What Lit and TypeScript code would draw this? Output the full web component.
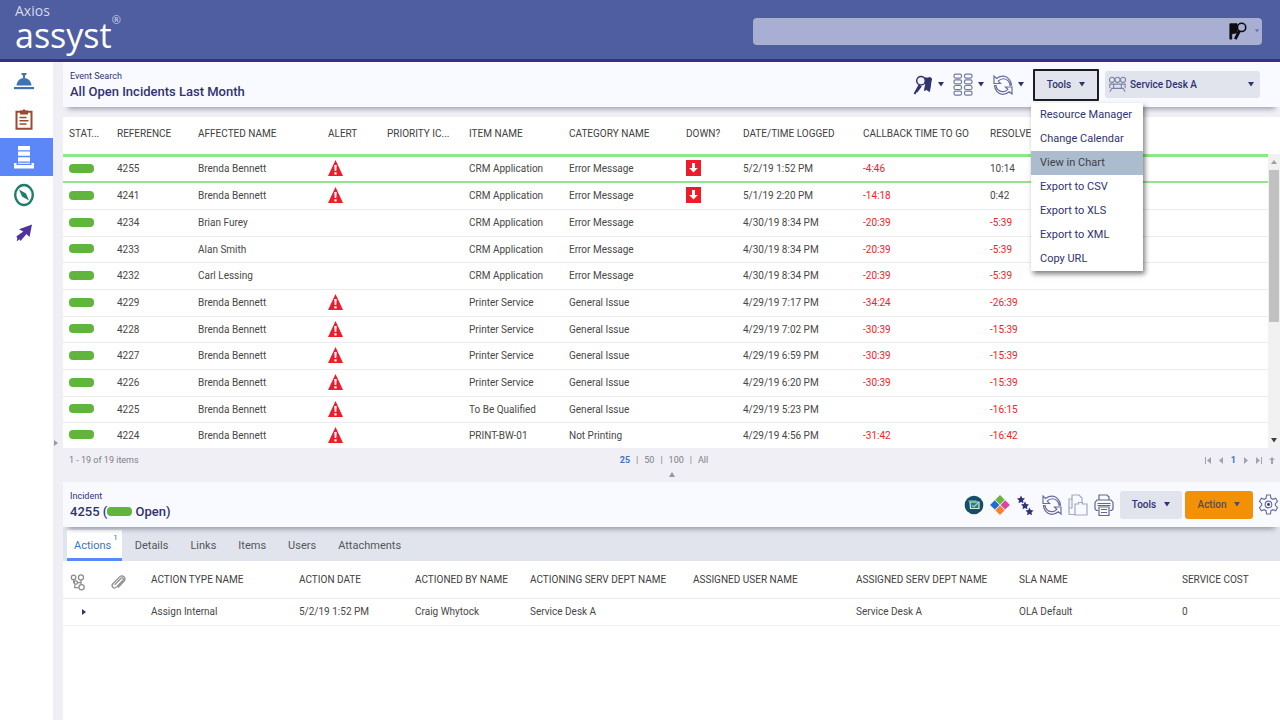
import { LitElement, html, svg, css, nothing } from "lit";
import { customElement, property } from "lit/decorators.js";
import { classMap } from "lit/directives/class-map.js";

const caret = html`<svg class="caret" width="6" height="5" viewBox="0 0 6 5" aria-hidden="true"><path d="M0 0h6L3 4.6z" fill="currentColor" /></svg>`;

const icon = (body: unknown, size = 20, box = 20) =>
  html`<svg width=${size} height=${size} viewBox="0 0 ${box} ${box}" fill="none" stroke="currentColor" aria-hidden="true">${body}</svg>`;

const icons = {
  bell: svg`<g fill="#3c74b4" stroke="none"><path d="M7.500 2h5v1.500l-1.500 1v2.500h-2v-2.500l-1.500-1z"/><path d="M2.500 14.500c.3-4.500 3.500-7.500 7.500-7.500s7.200 3 7.500 7.500z"/><path d="M0 16h20v2.200h-20z"/></g>`,
  clipboard: svg`<g stroke="#9b4a30"><path d="M2.500 2.800h15v17h-15z" stroke-width="2"/><path d="M6 1.500h2.500l1.500-1.500 1.500 1.500h2.500v4h-8z" fill="#9b4a30" stroke="none"/><path d="M5.500 8.500h7M5.500 11.800h9M5.500 15h7" stroke-width="1.500"/></g>`,
  stack: svg`<g fill="#fff" stroke="none"><path d="M4-1h12v4.200h-12zM4 4.600h12v4.200h-12zM4 10.200h12v4.200h-12zM4 15.800h12v1h-12z"/><path d="M0 16h2.500v2h15v-2h2.500v5.500h-20z"/></g>`,
  compass: svg`<g><ellipse cx="10" cy="10" rx="8.800" ry="10" stroke="#1f7d6b" stroke-width="2.400"/><path d="M5 4.500l7 4 3 7-7-4z" fill="#1f7d6b" stroke="none"/></g>`,
  arrow: svg`<g fill="#50329c" stroke="none"><path d="M18 1.500l-2.500 12.500-3-3-6 7-1-1.700-2.800 2.200.6-3.500-1-1.500 7-5-4.300-2.200z"/></g>`,
  flagSearch: svg`<g><path d="M9 3.500c3-1.500 5 .5 8-1l1.500 1-2 13-3-2-2 1 1-6z" fill="#303370" stroke="#303370"/><circle cx="8" cy="5.800" r="4.300" fill="#f1f3fb" stroke="#303370" stroke-width="1.500"/><path d="M6.500 10L1.500 19M8 11l-4.500 6" stroke="#303370" stroke-width="2"/></g>`,
  flagSearchDark: svg`<g><path d="M1 2h8v10l-6 1v6h-2z" fill="#0c0d10" stroke="#0c0d10"/><circle cx="14" cy="6" r="4.600" fill="#a9aed3" stroke="#0c0d10" stroke-width="1.800"/><path d="M11.500 10L7 19" stroke="#0c0d10" stroke-width="3.200"/></g>`,
  grid: svg`<g stroke="#74799f" stroke-width="1.200">${[0, 1, 2, 3].map((r) => svg`<rect x="1" y=${-0.9 + r * 5.7} width="7.500" height="4" rx="1.500"/><rect x="11.500" y=${-0.9 + r * 5.7} width="7.500" height="4" rx="1.500"/>`)}</g>`,
  refresh: svg`<g stroke="#686c9c" stroke-width="1.200"><path d="M1 1v7.500h6.500l-2.300-2.400c3-3.300 7.600-3 10.200 0 1 1.200 1.500 2.500 1.600 4h1.500c-.2-4-3.300-8.600-8-8.900-2.700-.1-5 .8-6.800 2.300z"/><path d="M19 19v-7h-6.500l2.300 2.300c-3 3.300-7.600 3-10.200 0-1-1.200-1.500-2.400-1.600-3.800h-1.500c.2 4 3.300 8.600 8 8.900 2.700.1 5-1.100 6.800-2.600z"/></g>`,
  people: svg`<g stroke="#7b80a6" stroke-width="1.300"><circle cx="3.500" cy="4.500" r="3"/><circle cx="10" cy="4.500" r="3"/><circle cx="16.500" cy="4.500" r="3"/><path d="M1 18.500l2.500-4h13l2.500 4M5.500 14.500v-5h9v5M1 14.500V9.500h4M19 14.500V9.500h-4"/></g>`,
  alert: svg`<g stroke="none"><path d="M7.500 0L15 16h-15z" fill="#ee1c2b"/><path d="M6.300 5h2.400l-.4 6h-1.600zM6.400 12.300h2.200v2.200h-2.200z" fill="#fff"/></g>`,
  down: svg`<g stroke="none"><path d="M0 0h15v16h-15z" fill="#ee1c2b"/><path d="M6 3h3v5h2.800L7.500 12.500 3.200 8H6z" fill="#fff"/></g>`,
  badge: svg`<g><circle cx="10" cy="10" r="9.300" fill="#164e67" stroke="none"/><path d="M6 7h9v6.500h-8.500z" fill="#1d8295" stroke="#d7ead8" stroke-width="1.200"/><path d="M4.500 6h8M8 10.500l2 1.300 4-3.800" stroke="#9fd0b1" stroke-width="1.200"/></g>`,
  diamonds: svg`<g stroke="none"><path d="M10 0l4.700 4.700L10 9.400 5.300 4.700z" fill="#6cb23e"/><path d="M4.800 5.200L9.500 9.900l-4.700 4.700L.1 9.900z" fill="#1c6fd0"/><path d="M15.200 5.200l4.700 4.700-4.700 4.700-4.700-4.700z" fill="#d9489e"/><path d="M10 10.500l4.700 4.700L10 19.900l-4.700-4.700z" fill="#f58232"/></g>`,
  stars: svg`<g fill="#2f3376" stroke="none">${[[5, 4.5], [9, 10.500], [13.500, 16.500]].map(([x, y]) => svg`<path transform="translate(${x} ${y})" d="M0-4l1.200 2.600 2.800.3-2 2 .5 2.900L0 2.400-2.500 3.800l.5-2.900-2-2 2.800-.3z"/>`)}</g>`,
  copy: svg`<g stroke="#a3a6c3" stroke-width="1.200"><path d="M1 19.500v-15.500h3v-4h7l3 3v4.500M4 4v9h-3M1 19.500h6"/><path d="M7 9h3.500v-1.500h4v1.500h4.500v11h-12z"/></g>`,
  print: svg`<g stroke="#62668f" stroke-width="1.200"><path d="M5 5V0h8l2 2v3M4 15.500h-1.500l-1.500-1.500v-6.500l2-2.500h14l2 2.500v6.500l-1.500 1.500h-1.500M5 12h10v8.500h-10zM3.500 8.500h13M3.500 10.500h13M7 14.500h6M7 17.500h6"/></g>`,
  gear: svg`<g stroke="#686c9c" stroke-width="1.200"><path d="M8 0h4l.6 3.500 2 1.100 2.900-1.200 2 3.400-2.300 2.300v1.800l2.300 2.300-2 3.400-2.900-1.200-2 1.100-.6 3.500h-4l-.6-3.500-2-1.100-2.900 1.200-2-3.400 2.300-2.300v-1.800l-2.300-2.300 2-3.400 2.900 1.200 2-1.100z"/><circle cx="10" cy="10" r="3.500"/><circle cx="10" cy="10" r="1.500" fill="#2f3376" stroke="none"/></g>`,
  tree: svg`<g stroke="#8c8c8c" stroke-width="1.100"><circle cx="4" cy="3" r="2"/><circle cx="10.500" cy="3" r="2.200"/><circle cx="6" cy="7.500" r="1.500"/><circle cx="11" cy="11.500" r="2.300"/><path d="M4 5v2.500h.5M10.500 5.200v4M7.500 7.500h3M5 9.500v2.500h3.500"/></g>`,
  clip: svg`<g stroke="#8c8c8c" stroke-width="1.100"><path d="M4 9.500l5.500-5.500c1.500-1.300 3 .3 1.700 1.700L5.500 11.500c-2 2-5-.6-3-3L8.500 2.500c2.500-2.300 6 .8 4 3.500L7 11.800"/></g>`,
};

interface Incident {
  ref: string;
  name: string;
  alert: boolean;
  item: string;
  category: string;
  down?: boolean;
  logged: string;
  callback: string;
  resolve: string;
}

const row = (ref: string, name: string, alert: boolean, item: string, category: string, logged: string, callback: string, resolve: string, down = false): Incident =>
  ({ ref, name, alert, item, category, logged, callback, resolve, down });

const incidents: Incident[] = [
  row("4255", "Brenda Bennett", true, "CRM Application", "Error Message", "5/2/19 1:52 PM", "-4:46", "10:14", true),
  row("4241", "Brenda Bennett", true, "CRM Application", "Error Message", "5/1/19 2:20 PM", "-14:18", "0:42", true),
  row("4234", "Brian Furey", false, "CRM Application", "Error Message", "4/30/19 8:34 PM", "-20:39", "-5:39"),
  row("4233", "Alan Smith", false, "CRM Application", "Error Message", "4/30/19 8:34 PM", "-20:39", "-5:39"),
  row("4232", "Carl Lessing", false, "CRM Application", "Error Message", "4/30/19 8:34 PM", "-20:39", "-5:39"),
  row("4229", "Brenda Bennett", true, "Printer Service", "General Issue", "4/29/19 7:17 PM", "-34:24", "-26:39"),
  row("4228", "Brenda Bennett", true, "Printer Service", "General Issue", "4/29/19 7:02 PM", "-30:39", "-15:39"),
  row("4227", "Brenda Bennett", true, "Printer Service", "General Issue", "4/29/19 6:59 PM", "-30:39", "-15:39"),
  row("4226", "Brenda Bennett", true, "Printer Service", "General Issue", "4/29/19 6:20 PM", "-30:39", "-15:39"),
  row("4225", "Brenda Bennett", true, "To Be Qualified", "General Issue", "4/29/19 5:23 PM", "", "-16:15"),
  row("4224", "Brenda Bennett", true, "PRINT-BW-01", "Not Printing", "4/29/19 4:56 PM", "-31:42", "-16:42"),
];

const shared = css`
  * {
    box-sizing: border-box;
  }
  button,
  select,
  input {
    font: inherit;
    color: inherit;
    border: 0;
    padding: 0;
    background: none;
  }
  button {
    display: flex;
    align-items: center;
    justify-content: center;
  }
  svg {
    display: block;
    flex: none;
    overflow: visible;
  }
  a {
    color: inherit;
    text-decoration: none;
  }
  .pill {
    display: inline-block;
    width: 25px;
    height: 9px;
    border-radius: 4px;
    background: #62b53c;
  }
  .bar {
    position: relative;
    display: flex;
    align-items: center;
    justify-content: space-between;
    height: 45px;
    padding-left: 7px;
    background: #f9faff;
    color: #303370;
    box-shadow: 0 7px 5px -5px rgba(60, 60, 80, 0.45);
  }
  .titles p,
  .titles h1,
  .titles h2 {
    margin: 0;
  }
  .titles p {
    font-size: 9px;
    line-height: 14px;
  }
  .titles h1,
  .titles h2 {
    font-size: 13px;
    line-height: 18px;
    font-weight: 500;
  }
  .tools {
    display: flex;
    align-items: center;
  }
  .btn {
    height: 28px;
    gap: 8px;
    border-radius: 3px;
    background: #e1e4ec;
    font-size: 10px;
    font-weight: 500;
    color: #303370;
  }
  table {
    width: 100%;
    table-layout: fixed;
    border-collapse: separate;
    border-spacing: 0;
    font-size: 10px;
    line-height: 14px;
    color: #484848;
  }
  th,
  td {
    padding: 0 0 0 6px;
    text-align: left;
    font-weight: 400;
    white-space: nowrap;
    vertical-align: middle;
  }
  th {
    height: 37px;
    padding-bottom: 4px;
    color: #404040;
  }
  td {
    height: 27px;
    border-bottom: 1px solid #ebebeb;
  }
`;

@customElement("app-header")
class AppHeader extends LitElement {
  static styles = [
    shared,
    css`
      :host {
        display: flex;
        align-items: center;
        justify-content: space-between;
        height: 62px;
        padding: 0 18px 0 15px;
        background: #4f5da1;
        border-bottom: 3px solid #3a2f80;
      }
      .logo {
        display: grid;
        grid-template-columns: auto auto;
        padding-bottom: 4px;
        font-family: "Open Sans", sans-serif;
        color: #fff;
      }
      .maker {
        grid-column: 1 / -1;
        font-size: 14px;
        line-height: 16px;
        color: #d5d9ee;
      }
      .name {
        font-size: 34px;
        line-height: 33px;
      }
      .reg {
        font-size: 11px;
        line-height: 1px;
        color: #d5d9ee;
      }
      .search {
        display: flex;
        align-items: center;
        max-width: 509px;
        flex: 1;
        height: 27px;
        gap: 8px;
        margin-top: 3px;
        padding-right: 3px;
        border-radius: 4px;
        background: #a9aed3;
        color: #6b6fae;
      }
      input {
        flex: 1;
        min-width: 0;
        height: 100%;
        padding-left: 8px;
        color: #20234f;
      }
    `,
  ];
  render() {
    return html`
      <div class="logo"><span class="maker">Axios</span><span class="name">assyst</span><span class="reg">®</span></div>
      <div class="search">
        <input type="text" aria-label="Search" />
        <button aria-label="Run search">${icon(icons.flagSearchDark, 18)}</button>
        <button aria-label="Search options"><svg width="4" height="4" viewBox="0 0 6 5" aria-hidden="true"><path d="M0 0h6L3 4.600z" fill="currentColor" /></svg></button>
      </div>
    `;
  }
}

@customElement("side-nav")
class SideNav extends LitElement {
  static styles = [
    shared,
    css`
      :host {
        flex: none;
        width: 53px;
        background: #fff;
      }
      a {
        display: flex;
        align-items: center;
        height: 38px;
        padding-left: 14px;
      }
      .active {
        background: #5b87f8;
      }
    `,
  ];
  render() {
    const items: [string, unknown][] = [
      ["Service desk", icons.bell],
      ["Tasks", icons.clipboard],
      ["Event search", icons.stack],
      ["Explore", icons.compass],
      ["Shortcuts", icons.arrow],
    ];
    return html`<nav>
      ${items.map(([label, body], i) => html`<a href="#" class=${classMap({ active: i === 2 })} aria-label=${label}>${icon(body)}</a>`)}
    </nav>`;
  }
}

@customElement("tools-menu")
class ToolsMenu extends LitElement {
  @property({ type: Boolean }) open = false;
  static styles = [
    shared,
    css`
      :host {
        position: relative;
        display: block;
      }
      .btn {
        width: 66px;
        height: 32px;
        border: 2px solid #1c1d22;
        border-radius: 1px;
      }
      .menu {
        position: absolute;
        z-index: 2;
        top: 100%;
        left: -2px;
        width: 112px;
        margin: 2px 0 0;
        padding: 0;
        list-style: none;
        background: #fff;
        box-shadow: 2px 3px 5px rgba(0, 0, 0, 0.5);
        color: #303370;
        font-size: 11px;
      }
      .menu button {
        width: 100%;
        height: 24px;
        padding-left: 9px;
        justify-content: flex-start;
      }
      .menu .hot {
        background: #abbccf;
        color: #3f4048;
      }
    `,
  ];
  render() {
    const entries = ["Resource Manager", "Change Calendar", "View in Chart", "Export to CSV", "Export to XLS", "Export to XML", "Copy URL"];
    return html`
      <button class="btn" aria-haspopup="menu" aria-expanded=${this.open}>Tools ${caret}</button>
      ${this.open
        ? html`<ul class="menu" role="menu">
            ${entries.map((e) => html`<li role="none"><button role="menuitem" class=${classMap({ hot: e === "View in Chart" })}>${e}</button></li>`)}
          </ul>`
        : nothing}
    `;
  }
}

@customElement("event-search")
class EventSearch extends LitElement {
  static styles = [
    shared,
    css`
      :host {
        display: block;
      }
      .bar {
        z-index: 2;
        padding-right: 20px;
      }
      .icons {
        display: flex;
        gap: 9px;
        margin-right: 9px;
      }
      .icons button {
        gap: 5px;
      }
      .desk {
        display: flex;
        align-items: center;
        width: 155px;
        height: 27px;
        margin-left: 6px;
        padding: 0 6px 0 4px;
        gap: 4px;
        border-radius: 3px;
        background: #e1e4ec;
        font-size: 10px;
        font-weight: 500;
      }
      .desk select {
        flex: 1;
        min-width: 0;
        appearance: none;
      }
      .grid {
        display: flex;
        margin-top: 10px;
        background: #fff;
      }
      .list {
        flex: 1;
        min-width: 0;
      }
      .c48 { width: 48px; }
      .c57 { width: 57px; }
      .c59 { width: 59px; }
      .c81 { width: 81px; }
      .c82 { width: 82px; }
      .c100 { width: 100px; }
      .c117 { width: 117px; }
      .c120 { width: 120px; }
      .c127 { width: 127px; }
      .c130 { width: 130px; }
      td svg {
        margin-bottom: 2px;
      }
      tr:nth-child(3n + 1) td {
        height: 26px;
      }
      tbody tr.selected td {
        height: 29px;
        border-top: 3px solid #90e78b;
        border-bottom: 2px solid #90e78b;
      }
      tbody tr:last-child td {
        height: 25px;
        border-bottom: 0;
      }
      .late {
        color: #f0222b;
      }
      .scroll {
        display: flex;
        flex-direction: column;
        align-items: center;
        width: 12px;
        margin-top: 37px;
        background: #f1f1f1;
        color: #404040;
      }
      .scroll .up {
        display: flex;
        align-items: center;
        height: 16px;
        color: #a0a0a0;
      }
      .thumb {
        width: 10px;
        height: 152px;
        background: #c1c1c1;
      }
      .scroll .dn {
        margin-top: auto;
        padding-bottom: 5px;
      }
      .pager {
        display: grid;
        grid-template-columns: 1fr auto 1fr;
        align-items: center;
        height: 24px;
        padding: 0 5px 0 6px;
        font-size: 9px;
        line-height: 14px;
        color: #7d7d85;
      }
      .sizes {
        display: flex;
        gap: 6px;
        margin-right: 16px;
      }
      .current {
        font-weight: 700;
        color: #3b75c4;
      }
      .pages {
        display: flex;
        justify-content: flex-end;
        align-items: center;
        gap: 7px;
        color: #a3a3ad;
      }
      .split {
        width: 100%;
        height: 10px;
        padding-bottom: 5px;
        color: #9898a4;
      }
    `,
  ];
  render() {
    const heads = ["STAT...", "REFERENCE", "AFFECTED NAME", "ALERT", "PRIORITY IC...", "ITEM NAME", "CATEGORY NAME", "DOWN?", "DATE/TIME LOGGED", "CALLBACK TIME TO GO", "RESOLVE"];
    const cols = ["c48", "c81", "c130", "c59", "c82", "c100", "c117", "c57", "c120", "c127", ""];
    const late = (v: string) => classMap({ late: v.startsWith("-") });
    const glyph = (d: string, label: string) =>
      html`<button aria-label=${label}><svg width="6" height="7" viewBox="0 0 6 7" aria-hidden="true"><path d=${d} fill="currentColor" /></svg></button>`;
    return html`
      <div class="bar">
        <div class="titles"><p>Event Search</p><h1>All Open Incidents Last Month</h1></div>
        <div class="tools">
          <div class="icons">
            <button aria-label="Search">${icon(icons.flagSearch)}${caret}</button>
            <button aria-label="Columns">${icon(icons.grid)}${caret}</button>
            <button aria-label="Refresh">${icon(icons.refresh)}${caret}</button>
          </div>
          <tools-menu open></tools-menu>
          <label class="desk">${icon(icons.people, 17)}<select aria-label="Service department"><option>Service Desk A</option></select>${caret}</label>
        </div>
      </div>
      <div class="grid">
        <div class="list">
          <table>
            <colgroup>${cols.map((c) => html`<col class=${c} />`)}</colgroup>
            <thead><tr>${heads.map((h) => html`<th>${h}</th>`)}</tr></thead>
            <tbody>
              ${incidents.map(
                (r, i) => html`<tr class=${classMap({ selected: i === 0 })}>
                  <td><svg width="25" height="9" role="img" aria-label="Open"><rect width="25" height="9" rx="4" fill="#62b53c" /></svg></td>
                  <td>${r.ref}</td>
                  <td>${r.name}</td>
                  <td>${r.alert ? icon(icons.alert, 16, 16) : nothing}</td>
                  <td></td>
                  <td>${r.item}</td>
                  <td>${r.category}</td>
                  <td>${r.down ? icon(icons.down, 16, 16) : nothing}</td>
                  <td>${r.logged}</td>
                  <td class=${late(r.callback)}>${r.callback}</td>
                  <td class=${late(r.resolve)}>${r.resolve}</td>
                </tr>`
              )}
            </tbody>
          </table>
        </div>
        <div class="scroll" aria-hidden="true">
          <span class="up"><svg width="6" height="4" viewBox="0 0 6 4"><path d="M0 4h6L3 0z" fill="currentColor" /></svg></span>
          <span class="thumb"></span>
          <span class="dn">${caret}</span>
        </div>
      </div>
      <div class="pager">
        <span>1 - 19 of 19 items</span>
        <div class="sizes"><a class="current" href="#">25</a><span>|</span><a href="#">50</a><span>|</span><a href="#">100</a><span>|</span><a href="#">All</a></div>
        <div class="pages">
          ${glyph("M0 0h1v7H0zM6 0v7L2 3.500z", "First page")}${glyph("M5 0v7L1 3.500z", "Previous page")}
          <a class="current" href="#">1</a>
          ${glyph("M1 0v7l4-3.500z", "Next page")}${glyph("M5 0h1v7H5zM0 0v7l4-3.500z", "Last page")}${glyph("M3 0l3 3H4v4H2V3H0z", "Back to top")}
        </div>
      </div>
      <button class="split" aria-label="Collapse list"><svg width="6" height="5" viewBox="0 0 6 5" aria-hidden="true"><path d="M0 5h6L3 0z" fill="currentColor" /></svg></button>
    `;
  }
}

@customElement("incident-detail")
class IncidentDetail extends LitElement {
  static styles = [
    shared,
    css`
      :host {
        display: block;
        flex: 1;
        background: #fff;
      }
      .bar {
        padding-right: 2px;
      }
      .tools {
        gap: 6px;
      }
      .btns {
        display: flex;
        gap: 3px;
      }
      .btns .btn {
        width: 62px;
      }
      .btns .action {
        width: 68px;
        background: #f39106;
        color: #5b4a58;
      }
      .tabs {
        display: flex;
        height: 34px;
        padding-left: 4px;
        background: #e1e4ec;
        font-size: 11px;
        color: #55565c;
      }
      .tabs a {
        display: flex;
        align-items: center;
        padding: 3px 11px 0;
      }
      .tabs .on {
        gap: 2px;
        margin: 3px 2px 0 0;
        padding: 3px 4px 0 7px;
        background: #fff;
        border-bottom: 3px solid #5b87f8;
        color: #3b75c4;
      }
      sup {
        align-self: flex-start;
        font-size: 8px;
        line-height: 9px;
      }
      .c41 { width: 41px; }
      .c115 { width: 115px; }
      .c116 { width: 116px; }
      .c148 { width: 148px; }
      .c163 { width: 163px; }
      th {
        height: 38px;
        padding-bottom: 0;
        border-bottom: 1px solid #ebebeb;
      }
      td {
        border-bottom-color: #f3f3f3;
      }
      th svg {
        margin-top: 4px;
      }
      .expand {
        width: 30px;
        color: #303370;
      }
    `,
  ];
  render() {
    const heads = ["ACTION TYPE NAME", "ACTION DATE", "ACTIONED BY NAME", "ACTIONING SERV DEPT NAME", "ASSIGNED USER NAME", "ASSIGNED SERV DEPT NAME", "SLA NAME", "SERVICE COST"];
    const cols = ["c41", "c41", "c148", "c116", "c115", "c163", "c163", "c163", "c163", ""];
    const cells = ["Assign Internal", "5/2/19 1:52 PM", "Craig Whytock", "Service Desk A", "", "Service Desk A", "OLA Default", "0"];
    const tools: [string, unknown][] = [
      ["Knowledge", icons.badge],
      ["Related items", icons.diamonds],
      ["Escalate", icons.stars],
      ["Refresh", icons.refresh],
      ["Copy", icons.copy],
      ["Print", icons.print],
    ];
    return html`
      <div class="bar">
        <div class="titles"><p>Incident</p><h2>4255 (<span class="pill"></span> Open)</h2></div>
        <div class="tools">
          ${tools.map(([label, body]) => html`<button aria-label=${label}>${icon(body)}</button>`)}
          <div class="btns"><button class="btn">Tools ${caret}</button><button class="btn action">Action ${caret}</button></div>
          <button aria-label="Settings">${icon(icons.gear, 19)}</button>
        </div>
      </div>
      <nav class="tabs">
        <a class="on" href="#">Actions<sup>1</sup></a>
        ${["Details", "Links", "Items", "Users", "Attachments"].map((t) => html`<a href="#">${t}</a>`)}
      </nav>
      <table>
        <colgroup>${cols.map((c) => html`<col class=${c} />`)}</colgroup>
        <thead>
          <tr>
            <th aria-label="Hierarchy">${icon(icons.tree, 16, 14)}</th>
            <th aria-label="Attachments">${icon(icons.clip, 16, 14)}</th>
            ${heads.map((h) => html`<th>${h}</th>`)}
          </tr>
        </thead>
        <tbody>
          <tr>
            <td><button class="expand" aria-label="Expand row"><svg width="4" height="6" viewBox="0 0 4 6" aria-hidden="true"><path d="M0 0v6l4-3z" fill="currentColor" /></svg></button></td>
            <td></td>
            ${cells.map((c) => html`<td>${c}</td>`)}
          </tr>
        </tbody>
      </table>
    `;
  }
}

@customElement("app-root")
class AppRoot extends LitElement {
  static styles = [
    shared,
    css`
      :host {
        display: flex;
        flex-direction: column;
        min-height: 100vh;
        background: #f0eff6;
        font-family: Roboto, "Liberation Sans", sans-serif;
        font-size: 10px;
      }
      .body {
        display: flex;
        flex: 1;
      }
      .gutter {
        width: 10px;
        flex: none;
        align-items: flex-start;
        justify-content: flex-start;
        padding-top: 378px;
        color: #9898a4;
      }
      main {
        display: flex;
        flex-direction: column;
        flex: 1;
        min-width: 0;
      }
    `,
  ];
  render() {
    return html`
      <app-header></app-header>
      <div class="body">
        <side-nav></side-nav>
        <button class="gutter" aria-label="Collapse navigation"><svg width="5" height="6" viewBox="0 0 5 6" aria-hidden="true"><path d="M1 0v6l4-3z" fill="currentColor" /></svg></button>
        <main><event-search></event-search><incident-detail></incident-detail></main>
      </div>
    `;
  }
}
